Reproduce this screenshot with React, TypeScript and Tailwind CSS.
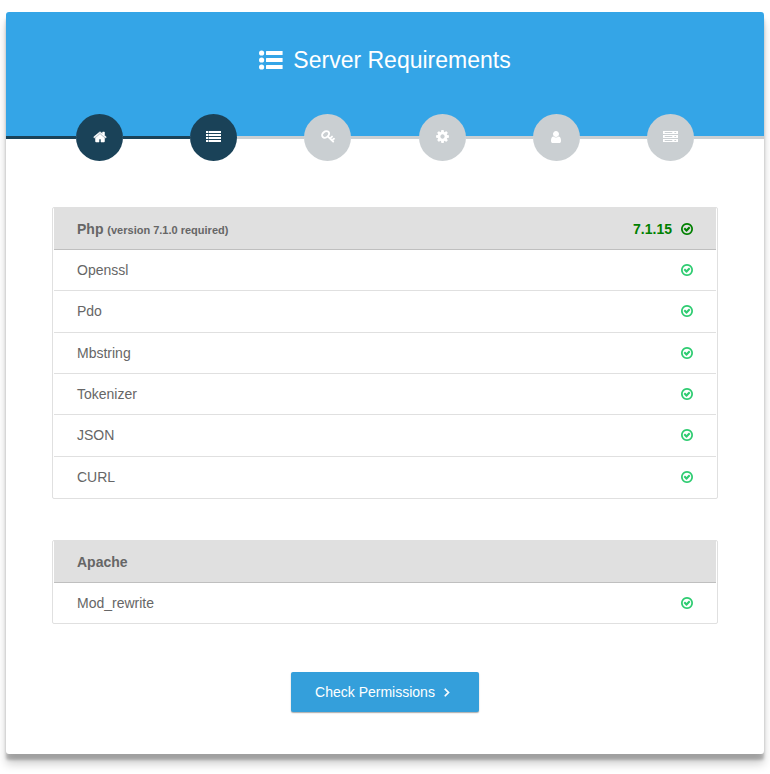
import { Fragment } from 'react'
import type { ReactNode } from 'react'

const paths = {
  home: 'M1472 992v480q0 26-19 45t-45 19h-384v-384h-256v384h-384q-26 0-45-19t-19-45v-480q0-1 .5-3t.5-3l575-474 575 474q1 2 1 6zm223-69l-62 74q-8 9-21 11h-3q-13 0-21-7l-692-577-692 577q-12 8-24 7-13-2-21-11l-62-74q-8-10-7-23.5t11-21.5l719-599q32-26 76-26t76 26l244 204v-195q0-14 9-23t23-9h192q14 0 23 9t9 23v408l219 182q10 8 11 21.5t-7 23.5z',
  cog: 'M1152 896q0-106-75-181t-181-75-181 75-75 181 75 181 181 75 181-75 75-181zm512-109v222q0 12-8 23t-20 13l-185 28q-19 54-39 91 35 50 107 138 10 12 10 25t-9 23q-27 37-99 108t-94 71q-12 0-26-9l-138-108q-44 23-91 38-16 136-29 186-7 28-36 28h-222q-14 0-24.5-8.5t-11.5-21.5l-28-184q-49-16-90-37l-141 107q-10 9-25 9-14 0-25-11-126-114-165-168-7-10-7-23 0-12 8-23 15-21 51-66.5t54-70.5q-27-50-41-99l-183-27q-13-2-21-12.5t-8-23.5v-222q0-12 8-23t19-13l186-28q14-46 39-92-40-57-107-138-10-12-10-24 0-10 9-23 26-36 98.5-107.5t94.5-71.5q13 0 26 10l138 107q44-23 91-38 16-136 29-186 7-28 36-28h222q14 0 24.5 8.5t11.5 21.5l28 184q49 16 90 37l142-107q9-9 24-9 13 0 25 10 129 119 165 170 7 8 7 22 0 12-8 23-15 21-51 66.5t-54 70.5q26 50 41 98l183 28q13 2 21 12.5t8 23.5z',
  user: 'M1536 1399q0 109-62.5 187t-150.5 78h-854q-88 0-150.5-78t-62.5-187q0-85 8.5-160.5t31.5-152 58.5-131 94-89 134.5-34.5q131 128 313 128t313-128q76 0 134.5 34.5t94 89 58.5 131 31.5 152 8.5 160.5zm-256-887q0 159-112.5 271.5t-271.5 112.5-271.5-112.5-112.5-271.5 112.5-271.5 271.5-112.5 271.5 112.5 112.5 271.5z',
  check: 'M1299 813l-422 422q-19 19-45 19t-45-19l-294-294q-19-19-19-45t19-45l102-102q19-19 45-19t45 19l147 147 275-275q19-19 45-19t45 19l102 102q19 19 19 45t-19 45zm141 83q0-148-73-273t-198-198-273-73-273 73-198 198-73 273 73 273 198 198 273 73 273-73 198-198 73-273zm224 0q0 209-103 385.5t-279.5 279.5-385.5 103-385.5-103-279.5-279.5-103-385.5 103-385.5 279.5-279.5 385.5-103 385.5 103 279.5 279.5 103 385.5z',
  angle: 'M1171 960q0 13-10 23l-466 466q-10 10-23 10t-23-10l-50-50q-10-10-10-23t10-23l393-393-393-393q-10-10-10-23t10-23l50-50q10-10 23-10t23 10l466 466q10 10 10 23z',
}

type IconProps = { name: keyof typeof paths; className?: string; weight?: number }

function Icon({ name, className = 'size-3.5', weight = 0 }: IconProps) {
  return (
    <svg
      viewBox="0 0 1792 1792"
      fill="currentColor"
      stroke={weight ? 'currentColor' : 'none'}
      strokeWidth={weight}
      aria-hidden="true"
      className={`shrink-0 ${className}`}
    >
      <path d={paths[name]} />
    </svg>
  )
}

function TitleListIcon() {
  return (
    <svg width="24" height="20" viewBox="0 0 24 20" fill="currentColor" aria-hidden="true">
      {[3, 10, 17].map((y) => (
        <Fragment key={y}>
          <circle cx="2.6" cy={y} r="2.6" />
          <rect x="7" y={y - 2} width="16.6" height="4" rx="0.5" />
        </Fragment>
      ))}
    </svg>
  )
}

function KeyIcon() {
  return (
    <svg
      width="14"
      height="13"
      viewBox="0 0 14 13"
      fill="none"
      stroke="currentColor"
      strokeWidth="1.9"
      strokeLinecap="round"
      aria-hidden="true"
    >
      <ellipse cx="4.6" cy="4.4" rx="3.8" ry="2.9" transform="rotate(-40 4.6 4.4)" />
      <path d="M7 6.6l5.2 5M9 8.6l2-2M11 10.4l1.9-1.7" />
    </svg>
  )
}

function ListIcon() {
  return (
    <svg width="15" height="11" viewBox="0 0 15 11" fill="currentColor" aria-hidden="true">
      {[0, 3, 6, 9].map((y) => (
        <Fragment key={y}>
          <rect x="0" y={y} width="2.4" height="2" />
          <rect x="2.9" y={y} width="12.1" height="2" />
        </Fragment>
      ))}
    </svg>
  )
}

function ServerIcon() {
  return (
    <svg width="15" height="11" viewBox="0 0 15 11" fill="currentColor" fillRule="evenodd" aria-hidden="true">
      {[0, 4, 8].map((y) => (
        <path key={y} d={`M0 ${y}h15v3h-15zM1.7 ${y + 1}v1h7.6v-1zM11.4 ${y + 1}v1h1.8v-1z`} />
      ))}
    </svg>
  )
}

const steps: { label: string; icon: ReactNode; active: boolean }[] = [
  { label: 'Welcome', icon: <Icon name="home" weight={70} />, active: true },
  { label: 'Requirements', icon: <ListIcon />, active: true },
  { label: 'Permissions', icon: <KeyIcon />, active: false },
  { label: 'Environment', icon: <Icon name="cog" className="size-[15px]" />, active: false },
  { label: 'Account', icon: <Icon name="user" />, active: false },
  { label: 'Finish', icon: <ServerIcon />, active: false },
]

function Steps() {
  return (
    <nav aria-label="Installation steps" className="-mt-[22px] flex items-center">
      <span className="h-[3px] w-[70px] bg-[#1a4258]" />
      {steps.map((step, i) => (
        <Fragment key={step.label}>
          {i > 0 && <span className={`h-[3px] flex-1 ${step.active ? 'bg-[#1a4258]' : 'bg-[#cacfd2]'}`} />}
          <a
            href="#"
            aria-label={step.label}
            className={`flex size-[47px] shrink-0 items-center justify-center rounded-full pb-0.5 text-white ${
              step.active ? 'bg-[#1a4258]' : 'bg-[#cacfd2]'
            }`}
          >
            {step.icon}
          </a>
        </Fragment>
      ))}
      <span className="h-[3px] w-[70px] bg-[#cacfd2]" />
    </nav>
  )
}

const row = 'flex items-center justify-between border-b pl-[23px] pr-[22px]'

function Requirements({ head, items, className }: { head: ReactNode; items: string[]; className: string }) {
  return (
    <ul className={`flex flex-col rounded-[2px] border border-[#e0e0e0] px-px ${className}`}>
      <li className={`${row} -mt-px min-h-[43px] border-[#bfbfbf] bg-[#e0e0e0] pt-0.5 font-bold`}>{head}</li>
      {items.map((item) => (
        <li key={item} className={`${row} flex-1 border-[#e0e0e0] last:border-transparent`}>
          {item}
          <Icon name="check" className="size-3.5 text-[#2ecc71]" />
        </li>
      ))}
    </ul>
  )
}

export default function App() {
  return (
    <div className="bg-white px-1.5 pt-3 pb-5 font-['Liberation_Sans',Arial,sans-serif] text-sm leading-5 text-[#666]">
      <main className="rounded-[3px] bg-white shadow-[0_10px_10px_rgba(0,0,0,0.19),0_6px_3px_rgba(0,0,0,0.23)]">
        <header className="flex h-[124px] items-start justify-center rounded-t-[3px] bg-[#34a5e7] pt-8 text-white">
          <h1 className="flex items-center gap-2.5 text-[23px] leading-8">
            <TitleListIcon />
            Server Requirements
          </h1>
        </header>
        <Steps />
        <div className="px-[46px] pt-[46px] pb-[42px]">
          <Requirements
            className="min-h-[292px]"
            head={
              <>
                <span>
                  Php <small className="text-[11px]">(version 7.1.0 required)</small>
                </span>
                <span className="flex items-center gap-2 text-[#008000]">
                  7.1.15
                  <Icon name="check" />
                </span>
              </>
            }
            items={['Openssl', 'Pdo', 'Mbstring', 'Tokenizer', 'JSON', 'CURL']}
          />
          <Requirements className="mt-[41px] min-h-[84px]" head="Apache" items={['Mod_rewrite']} />
          <div className="mt-12 flex justify-center">
            <button
              type="button"
              className="flex h-10 items-center gap-[5px] rounded-[2px] bg-[#349fdb] pr-[25px] pl-6 text-white shadow-[0_1px_2px_rgba(0,0,0,0.12),0_1px_1px_rgba(0,0,0,0.24)]"
            >
              Check Permissions
              <Icon name="angle" weight={90} />
            </button>
          </div>
        </div>
      </main>
    </div>
  )
}
